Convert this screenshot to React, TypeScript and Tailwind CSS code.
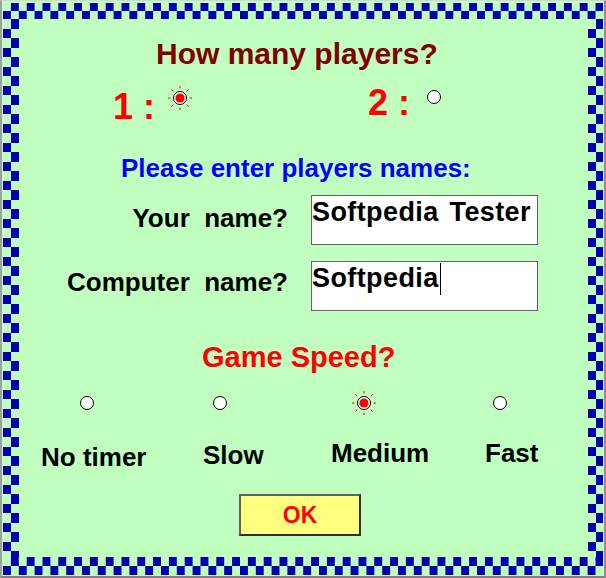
const font = "font-['Liberation_Sans',Arial,sans-serif] font-bold leading-none";
const blue = "#0000b0";

function Checker({ id, w, h }: { id: string; w: number; h: number }) {
  return (
    <svg className="block w-full h-full" shapeRendering="crispEdges">
      <defs>
        <pattern id={id} width={w} height={h} patternUnits="userSpaceOnUse">
          <rect x={w / 2} y={0} width={w / 2} height={h / 2} fill={blue} />
          <rect x={0} y={h / 2} width={w / 2} height={h / 2} fill={blue} />
        </pattern>
      </defs>
      <rect width="100%" height="100%" fill={`url(#${id})`} />
    </svg>
  );
}

function Radio() {
  return (
    <svg width="14" height="14" viewBox="0 0 14 14">
      <circle cx="7" cy="7" r="6.5" fill="#fff" stroke="#000" strokeWidth="1" />
    </svg>
  );
}

function RadioOn() {
  const rays = [0, 45, 90, 135, 180, 225, 270, 315];
  return (
    <svg width="26" height="26" viewBox="0 0 26 26">
      {rays.map((a) => {
        const r = (a * Math.PI) / 180;
        return (
          <line
            key={a}
            x1={13 + Math.sin(r) * 9.5}
            y1={13 - Math.cos(r) * 9.5}
            x2={13 + Math.sin(r) * 12}
            y2={13 - Math.cos(r) * 12}
            stroke="#ff0000"
            strokeWidth="1"
          />
        );
      })}
      <circle cx="13" cy="13" r="6.5" fill="#fff" stroke="#000" strokeWidth="1" />
      <circle cx="13" cy="13" r="4.6" fill="#ff0000" />
    </svg>
  );
}

export default function App() {
  return (
    <div className="w-[606px] h-[578px] bg-[#c0ffc0] border-t border-t-[#d4d4d4] border-l-2 border-l-[#a0a0a0] border-r-2 border-r-[#909090] border-b-2 border-b-[#808080] pt-[2px] pl-[1px] pr-[1px] pb-[1px]">
      <div className="grid grid-cols-[16px_569px_15px] grid-rows-[16px_538px_18px]">
        <div className="col-span-3"><Checker id="top" w={15.8} h={16} /></div>
        <div><Checker id="left" w={16} h={19} /></div>

        <div className={`flex flex-col pt-[20px] ${font}`}>
          <div className="pl-[137px] text-[30px] text-[#800000]">How many players?</div>

          <div className="mt-[16px] h-[40px] flex items-start text-[36px] text-[#ff0000]">
            <div className="w-[148px] pl-[94px] mt-[4px] whitespace-pre">1 :</div>
            <div className="w-[201px] mt-[0px]"><RadioOn /></div>
            <div className="w-[59px] mt-[0px] whitespace-pre">2 :</div>
            <div className="mt-[5px]"><Radio /></div>
          </div>

          <div className="mt-[30px] pl-[102px] text-[26px] text-[#0000ff]">Please enter players names:</div>

          <div className="mt-[14px] flex items-start">
            <div className="w-[269px] mt-[10px] text-right text-[26px] text-black whitespace-pre">Your  name?</div>
            <div className="ml-[23px] w-[227px] h-[50px] bg-white border border-[#646464] pt-[3px] text-[27px] tracking-[0.4px] [word-spacing:3px] text-black">
              Softpedia Tester
            </div>
          </div>

          <div className="mt-[16px] flex items-start">
            <div className="w-[269px] mt-[8px] text-right text-[26px] text-black whitespace-pre">Computer  name?</div>
            <div className="ml-[23px] w-[227px] h-[50px] bg-white border border-[#646464] flex items-start text-[27px] tracking-[0.4px] text-black">
              <span className="mt-[3px]">Softpedia</span>
              <span className="ml-[1px] mt-[1px] w-px h-[32px] bg-black" />
            </div>
          </div>

          <div className="mt-[32px] pl-[183px] text-[29px] text-[#ff0000]">Game Speed?</div>

          <div className="mt-[18px] h-[26px] flex items-start">
            <div className="w-[194px] pl-[61px] mt-[6px]"><Radio /></div>
            <div className="w-[138px] mt-[6px]"><Radio /></div>
            <div className="w-[142px]"><RadioOn /></div>
            <div className="mt-[6px]"><Radio /></div>
          </div>

          <div className="mt-[24px] h-[30px] flex items-start text-[26px] text-black">
            <div className="w-[184px] pl-[22px] mt-[4px]">No timer</div>
            <div className="w-[128px] mt-[2px]">Slow</div>
            <div className="w-[154px]">Medium</div>
            <div>Fast</div>
          </div>

          <div className="mt-[24px] pl-[220px]">
            <div className="w-[122px] h-[42px] flex items-center justify-center bg-[#ffff80] border-2 border-t-[#606060] border-l-[#606060] border-r-[#303030] border-b-[#303030] text-[23px] text-[#ff0000]">
              OK
            </div>
          </div>
        </div>

        <div><Checker id="right" w={16} h={19} /></div>
        <div className="col-span-3"><Checker id="bottom" w={15.8} h={18} /></div>
      </div>
    </div>
  );
}
